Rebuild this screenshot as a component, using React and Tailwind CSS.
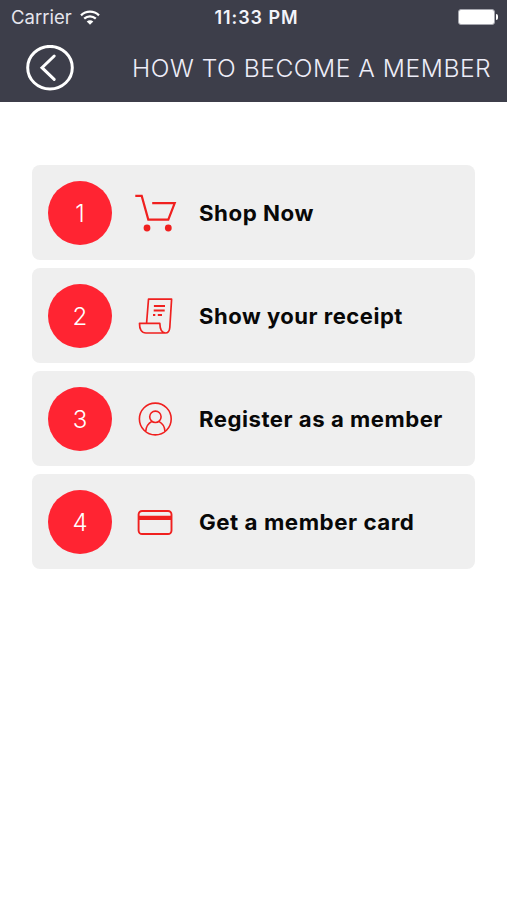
const line = { fill: 'none', stroke: 'currentColor' };

function CartIcon() {
  return (
    <svg viewBox="0 0 42 40" className="h-10 w-[42px]" {...line} strokeWidth="2.2">
      <path d="M.3 2.9H6.7L13.3 26.6H33.3L39.7 10.2H17.2" />
      <circle cx="12" cy="35" r="3.4" fill="currentColor" stroke="none" />
      <circle cx="33.3" cy="35" r="3.4" fill="currentColor" stroke="none" />
    </svg>
  );
}

function ReceiptIcon() {
  return (
    <svg viewBox="0 0 42 40" className="h-10 w-[42px]" {...line} strokeWidth="1.7" strokeLinejoin="round">
      <path d="M11.6 27 13.5 3.2H36.6L34.8 31.5C34.5 35 33.2 37 30.4 37H11C6.5 37 4.4 33.3 4.5 27.3H24.8C25 33.7 26.5 37 30.4 37" />
      <path d="M18.9 10H30M18.7 14.5H29.7" strokeWidth="1.9" />
      <path d="M18 19H20.3M22.8 19H27" strokeWidth="1.9" />
    </svg>
  );
}

function UserIcon() {
  return (
    <svg viewBox="0 0 42 40" className="h-10 w-[42px]" {...line} strokeWidth="1.6">
      <circle cx="20.3" cy="20" r="15.9" />
      <circle cx="20.4" cy="17.8" r="5.7" />
      <path d="M10.7 32.5C11 28 13.3 24.3 17 22.4M23.8 22.4C27.5 24.3 29.8 28 30 32.5" />
    </svg>
  );
}

function CardIcon() {
  return (
    <svg viewBox="0 0 42 40" className="h-10 w-[42px]" {...line} strokeWidth="1.9">
      <rect x="3.6" y="9" width="32.9" height="23" rx="3.5" />
      <path d="M3.6 15.9H36.5" strokeWidth="4.4" />
    </svg>
  );
}

const steps = [
  { label: 'Shop Now', Icon: CartIcon, stretch: 'scale-x-[1.036]' },
  { label: 'Show your receipt', Icon: ReceiptIcon, stretch: 'scale-x-[1.025]' },
  { label: 'Register as a member', Icon: UserIcon, stretch: 'scale-x-[1.03]' },
  { label: 'Get a member card', Icon: CardIcon, stretch: 'scale-x-[1.039]' },
];

function StatusBar() {
  return (
    <div className="grid h-[34px] grid-cols-3 items-center pr-[9px] pl-[11px] text-[#e6e6ee]">
      <div className="flex items-center gap-2">
        <span className="text-[18.5px] leading-none">Carrier</span>
        <svg viewBox="0 0 20 15" className="h-[15px] w-5" fill="none" stroke="white" strokeWidth="2.3">
          <path d="M1 5.3C6.2.5 13.8.5 19 5.3M4.2 8.7C7.6 5.6 12.4 5.6 15.8 8.7" />
          <path d="M10 14.7 6.7 11.4C8.6 9.7 11.4 9.7 13.3 11.4Z" fill="white" stroke="none" />
        </svg>
      </div>
      <span className="pt-px pl-1 text-center text-[18px] leading-none font-semibold tracking-[0.95px] whitespace-nowrap text-[#f4f4fa]">
        11:33 PM
      </span>
      <div className="flex items-center justify-end gap-px">
        <div className="h-4 w-[37px] rounded-[3px] border border-[#a5a6ae] bg-white" />
        <div className="h-1.5 w-[2px] rounded-r-full bg-white" />
      </div>
    </div>
  );
}

export default function App() {
  return (
    <div className="min-h-screen bg-white font-['Inter','Liberation_Sans',sans-serif]">
      <header className="h-[102px] bg-[#3d3e4a]">
        <StatusBar />
        <div className="flex h-[68px] items-center pl-[26px]">
          <button aria-label="Back" className="shrink-0 text-white">
            <svg viewBox="0 0 48 46" className="h-[46px] w-12" fill="none" stroke="currentColor" strokeWidth="3">
              <ellipse cx="24" cy="22.7" rx="22.3" ry="21.3" />
              <path d="M28.2 11 16 22.7 28.2 34.4" strokeLinecap="round" />
            </svg>
          </button>
          <h1 className="ml-[58px] origin-left scale-x-[1.047] pt-0.5 text-[23.5px] leading-none font-light whitespace-nowrap tracking-[0.5px] text-[#ededf8]">
            HOW TO BECOME A MEMBER
          </h1>
        </div>
      </header>
      <ol className="mt-[63.4px] ml-[32.4px] flex w-[443px] flex-col gap-2">
        {steps.map(({ label, Icon, stretch }, i) => (
          <li key={label} className="flex h-[95px] items-center rounded-lg bg-[#efefef] pl-[15.8px]">
            <span className="flex size-[63.5px] items-center justify-center rounded-full bg-[#ff2432] pt-[3px] text-[24px] font-light text-white">
              {i + 1}
            </span>
            <span className="ml-[23.3px] text-[#f0201f]">
              <Icon />
            </span>
            <span className={`ml-[22px] origin-left pt-0.5 text-[21.5px] leading-none font-bold tracking-[0.5px] whitespace-nowrap text-[#080808] ${stretch}`}>
              {label}
            </span>
          </li>
        ))}
      </ol>
    </div>
  );
}
